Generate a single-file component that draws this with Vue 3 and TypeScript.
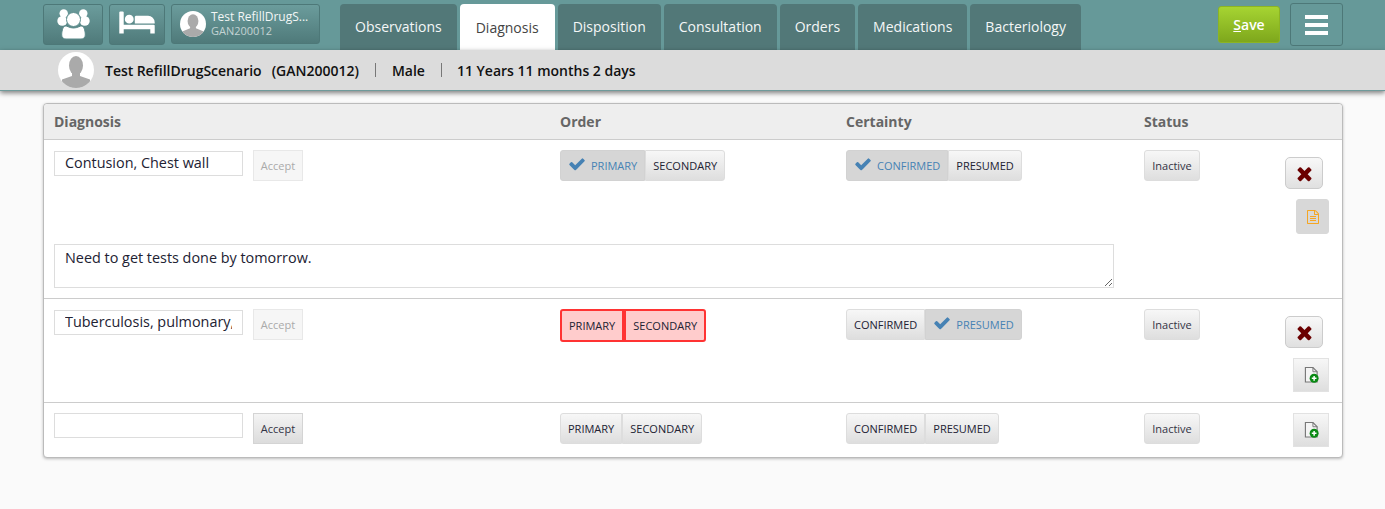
<script setup lang="ts">
interface Seg { label: string; selected?: boolean }
interface Row {
  name: string; acceptOff: boolean; error: boolean;
  order: Seg[]; certainty: Seg[];
  remove: boolean; note: 'view' | 'add'; comment?: string;
}
const tabs: string[] = ['Observations', 'Diagnosis', 'Disposition', 'Consultation', 'Orders', 'Medications', 'Bacteriology'];
const rows: Row[] = [
  { name: 'Contusion, Chest wall', acceptOff: true, error: false,
    order: [{ label: 'PRIMARY', selected: true }, { label: 'SECONDARY' }],
    certainty: [{ label: 'CONFIRMED', selected: true }, { label: 'PRESUMED' }],
    remove: true, note: 'view', comment: 'Need to get tests done by tomorrow.' },
  { name: 'Tuberculosis, pulmonary, confirmed', acceptOff: true, error: true,
    order: [{ label: 'PRIMARY' }, { label: 'SECONDARY' }],
    certainty: [{ label: 'CONFIRMED' }, { label: 'PRESUMED', selected: true }],
    remove: true, note: 'add' },
  { name: '', acceptOff: false, error: false,
    order: [{ label: 'PRIMARY' }, { label: 'SECONDARY' }],
    certainty: [{ label: 'CONFIRMED' }, { label: 'PRESUMED' }],
    remove: false, note: 'add' },
];
const check = 'M1671 566q0 40-28 68l-724 724-136 136q-28 28-68 28t-68-28l-136-136-362-362q-28-28-28-68t28-68l136-136q28-28 68-28t68 28l294 295 656-657q28-28 68-28t68 28l136 136q28 28 28 68z';
</script>

<template>
  <div class="page">
    <header class="topbar">
      <button class="navbtn people" aria-label="Patients">
        <svg viewBox="0 0 33 31" width="33" height="31" fill="#fff">
          <circle cx="6.700" cy="4.500" r="4.200"/>
          <circle cx="26.300" cy="4.500" r="4.200"/>
          <ellipse cx="5.300" cy="12" rx="5" ry="4.800"/>
          <ellipse cx="27.700" cy="12" rx="5" ry="4.800"/>
          <circle cx="16.500" cy="10.500" r="7" stroke="#5f8f8f" stroke-width="1"/>
          <path d="M8 17C10 16.500 12 19 16.500 19C21 19 23 16.500 25 17C27.500 18 28.300 23 28.300 26C28.300 29 26 30 24 30H9C7 30 4.700 29 4.700 26C4.700 23 5.500 18 8 17z" stroke="#5a8a8a" stroke-width="1"/>
        </svg>
      </button>
      <button class="navbtn bed" aria-label="Bed">
        <svg class="bedicon" viewBox="0 0 2048 1792" width="36" height="31" fill="#fff"><path d="M256 1024h1728q26 0 45 19t19 45v448h-256v-256h-1536v256h-256v-1216q0-26 19-45t45-19h128q26 0 45 19t19 45v704zm576-320q0-106-75-181t-181-75-181 75-75 181 75 181 181 75 181-75 75-181zm1216 256v-64q0-159-112.5-271.5t-271.5-112.5h-704q-26 0-45 19t-19 45v384h1152z"/></svg>
      </button>
      <button class="navbtn patient">
        <svg class="avatar-sm" viewBox="0 0 36 36"><circle cx="18" cy="18" r="18" fill="#fff"/><clipPath id="ca"><circle cx="18" cy="18" r="18"/></clipPath><g clip-path="url(#ca)" fill="#aaa"><ellipse cx="18" cy="14" rx="7.5" ry="9.5"/><path d="M14 20h8v4l10 4v10H4V28l10-4z"/></g></svg>
        <span class="who"><b>Test RefillDrugS...</b><i>GAN200012</i></span>
      </button>
      <nav class="tabs">
        <a v-for="t in tabs" :key="t" class="tab" :class="{ active: t === 'Diagnosis' }">{{ t }}</a>
      </nav>
      <button class="save"><u>S</u>ave</button>
      <button class="menu" aria-label="Menu"><span></span><span></span><span></span></button>
    </header>

    <section class="patientbar">
      <svg class="avatar" viewBox="0 0 36 36"><circle cx="18" cy="18" r="18" fill="#fff"/><clipPath id="cb"><circle cx="18" cy="18" r="18"/></clipPath><g clip-path="url(#cb)" fill="#aaa"><ellipse cx="18" cy="13.500" rx="7" ry="9.500"/><path d="M14 20h8v4l10 3.500V38H4V27.500l10-3.500z"/></g></svg>
      <span class="pname">Test RefillDrugScenario&nbsp;&nbsp; (GAN200012)</span>
      <span class="sep first"></span>
      <span class="pinfo">Male</span>
      <span class="sep"></span>
      <span class="pinfo">11 Years 11 months 2 days</span>
    </section>

    <main class="panel">
      <div class="grid head">
        <div>Diagnosis</div><div>Order</div><div>Certainty</div><div>Status</div>
      </div>
      <div v-for="(r, i) in rows" :key="i" class="row">
        <div class="grid">
          <div class="diag">
            <input class="name" type="text" :value="r.name" />
            <button class="accept" :class="{ off: r.acceptOff }">Accept</button>
          </div>
          <div>
            <div class="seg" :class="{ err: r.error }">
              <button v-for="s in r.order" :key="s.label" :class="{ sel: s.selected }">
                <svg v-if="s.selected" class="tick" viewBox="0 0 1792 1792"><path :d="check" fill="#4682b4"/></svg>{{ s.label }}
              </button>
            </div>
          </div>
          <div>
            <div class="seg">
              <button v-for="s in r.certainty" :key="s.label" :class="{ sel: s.selected }">
                <svg v-if="s.selected" class="tick" viewBox="0 0 1792 1792"><path :d="check" fill="#4682b4"/></svg>{{ s.label }}
              </button>
            </div>
          </div>
          <div><button class="inactive">Inactive</button></div>
          <div class="actions">
            <button v-if="r.remove" class="remove" aria-label="Remove">
              <svg viewBox="0 0 1792 1792" width="21" height="21"><path fill="#6b0000" d="M1490 1322q0 40-28 68l-136 136q-28 28-68 28t-68-28l-294-294-294 294q-28 28-68 28t-68-28l-136-136q-28-28-28-68t28-68l294-294-294-294q-28-28-28-68t28-68l136-136q28-28 68-28t68 28l294 294 294-294q28-28 68-28t68 28l136 136q28 28 28 68t-28 68l-294 294 294 294q28 28 28 68z"/></svg>
            </button>
            <button v-if="r.note === 'view'" class="note view" aria-label="Note">
              <svg viewBox="0 0 1792 1792" width="14" height="14"><path fill="#f5a623" d="M1596 380q28 28 48 76t20 88v1152q0 40-28 68t-68 28h-1344q-40 0-68-28t-28-68v-1600q0-40 28-68t68-28h896q40 0 88 20t76 48zm-444-244v376h376q-10-29-22-41l-313-313q-12-12-41-22zm384 1528v-1024h-416q-40 0-68-28t-28-68v-416h-768v1536h1280zm-1024-864q0-14 9-23t23-9h704q14 0 23 9t9 23v64q0 14-9 23t-23 9h-704q-14 0-23-9t-9-23v-64zm736 224q14 0 23 9t9 23v64q0 14-9 23t-23 9h-704q-14 0-23-9t-9-23v-64q0-14 9-23t23-9h704zm0 256q14 0 23 9t9 23v64q0 14-9 23t-23 9h-704q-14 0-23-9t-9-23v-64q0-14 9-23t23-9h704z"/></svg>
            </button>
            <button v-else class="note add" aria-label="Add note">
              <svg viewBox="0 0 16 17" width="15" height="16">
                <path d="M1.500.5h8l4.500 4.500v11h-12.500z" fill="#f4f4f4" stroke="#777" stroke-width="1.200"/>
                <path d="M9.500.5v4.500h4.500" fill="none" stroke="#777" stroke-width="1"/>
                <circle cx="10.800" cy="12" r="4.800" fill="#0a8a14"/>
                <path d="M8.300 12h5M10.800 9.500v5" stroke="#fff" stroke-width="1.600"/>
              </svg>
            </button>
          </div>
        </div>
        <textarea v-if="r.comment" class="comment" :value="r.comment"></textarea>
      </div>
    </main>
  </div>
</template>

<style scoped>
.page { min-height: 509px; background: #fafafa; font-family: "Open Sans", "Liberation Sans", sans-serif; overflow: hidden; }
button { font-family: inherit; cursor: pointer; }
.topbar { height: 50px; background: #669999; display: flex; align-items: flex-start; padding: 4px 42px 0 43px; box-sizing: border-box; }
.navbtn { height: 41px; border: 1px solid #4d7878; border-radius: 3px; background: linear-gradient(#6b9c9c, #4f7a7a); display: flex; align-items: center; justify-content: center; padding: 0; color: #fff; }
.people { width: 60px; }
.bed { width: 56px; margin-left: 6px; }
.bedicon { margin-bottom: 4px; }
.patient { width: 149px; height: 40px; margin-left: 6px; justify-content: flex-start; padding-left: 8px; }
.avatar-sm { width: 26px; height: 26px; }
.who { display: flex; flex-direction: column; margin-left: 5px; text-align: left; font-size: 12px; line-height: 14px; }
.who b { font-weight: 500; color: #f2f6f6; }
.who i { font-style: normal; font-size: 11px; color: #c3d3d3; }
.tabs { display: flex; gap: 3px; margin-left: 20px; height: 46px; }
.tab { padding: 0 15px 1px; display: flex; align-items: center; height: 46px; box-sizing: border-box; background: #527878; color: #f4f7f7; font-size: 14px; font-weight: 500; border-radius: 4px 4px 0 0; }
.tab.active { background: #fff; color: #444; font-weight: 400; padding: 1px 16px 0; }
.save { margin-left: auto; margin-top: 2px; width: 62px; height: 37px; border: 1px solid #8cb423; border-radius: 3px; background: linear-gradient(#a6d432, #7ea71c); color: #fff; font-size: 14px; font-weight: 600; padding: 0 0 1px; }
.menu { margin-left: 10px; margin-top: -1px; width: 53px; height: 43px; border: 1px solid #4d7878; border-radius: 3px; background: transparent; display: flex; flex-direction: column; align-items: center; justify-content: center; gap: 4px; padding: 0; }
.menu span { width: 23px; height: 4px; background: #fff; }
.patientbar { height: 40px; background: #dcdcdc; border-bottom: 1px solid #6f9a9a; box-shadow: 0 2px 5px rgba(0,0,0,.5); display: flex; align-items: center; padding-left: 58px; font-size: 14px; color: #111; position: relative; }
.avatar { width: 36px; height: 36px; margin-right: 11px; }
.pname, .pinfo { font-weight: 600; }
.pname { word-spacing: -0.3px; }
.sep { width: 1px; height: 14px; background: #777; margin: 0 15px 0 16px; }
.sep.first { margin-right: 16px; }
.panel { margin: 12px 42px 0 43px; border: 1px solid #bbb; border-radius: 4px; background: #fff; box-shadow: 0 1px 3px rgba(0,0,0,.25); }
.grid { display: grid; grid-template-columns: 506px 286px 298px 120px 1fr; }
.head { height: 35px; align-items: center; background: #eee; border-radius: 4px 4px 0 0; padding-left: 10px; grid-template-columns: 506px 286px 298px 1fr; font-size: 14px; font-weight: 700; color: #666; }
.row { border-top: 1px solid #ccc; padding: 10px 13px 10px 10px; }
.diag { display: flex; align-items: flex-start; gap: 10px; }
.name { width: 189px; height: 25px; margin-top: 1px; box-sizing: border-box; border: 1px solid #ddd; padding: 0 10px 2px; font: 14.4px "Open Sans", sans-serif; color: #223; outline: none; }
.row:last-child .name { margin-top: 0; }
.accept { width: 50px; height: 31px; border: 1px solid #d4d4d4; background: linear-gradient(#f4f4f4, #dcdcdc); font-size: 11px; color: #334; padding: 0; }
.accept.off { background: #f6f6f6; border-color: #e8e8e8; color: #aaa; }
.seg { display: inline-flex; }
.seg button { height: 31px; border: 1px solid #ddd; background: linear-gradient(#f7f7f7, #dedede); font-size: 11px; color: #223; padding: 0 7px; display: flex; align-items: center; white-space: nowrap; }
.seg button:first-child { border-radius: 3px 0 0 3px; }
.seg button:last-child { border-radius: 0 3px 3px 0; }
.seg button.sel { background: #d6d6d6; color: #4682b4; border-color: #d2d2d2; }
.tick { width: 18px; height: 18px; margin-right: 5px; margin-top: -3px; }
.seg.err button { height: 33px; background: #ffcccc; border: 2px solid #f33; color: #223; padding: 0 7px; }
.inactive { width: 56px; height: 31px; border: 1px solid #ddd; border-radius: 3px; background: linear-gradient(#f7f7f7, #dedede); font-size: 11px; color: #334; padding: 0; }
.actions { display: flex; flex-direction: column; align-items: flex-end; gap: 10px; }
.remove { width: 38px; height: 32px; margin: 7px 6px 0 0; border: 1px solid #ccc; border-radius: 5px; background: linear-gradient(#f8f8f8, #e0e0e0); display: flex; align-items: center; justify-content: center; padding: 0; }
.note { display: flex; align-items: center; justify-content: center; padding: 0; height: 34px; border: 1px solid #e2e2e2; }
.note.view { width: 33px; height: 35px; background: #d8d8d8; border-color: #d8d8d8; border-radius: 3px; }
.note.add { width: 36px; background: linear-gradient(#f7f7f7, #dedede); }
.comment { display: block; width: 1060px; height: 44px; margin-top: 10px; box-sizing: border-box; border: 1px solid #ddd; padding: 3px 10px; font: 14.4px "Open Sans", sans-serif; color: #223; outline: none; }
</style>

<style>
html, body { margin: 0; background: #fafafa; }
</style>
